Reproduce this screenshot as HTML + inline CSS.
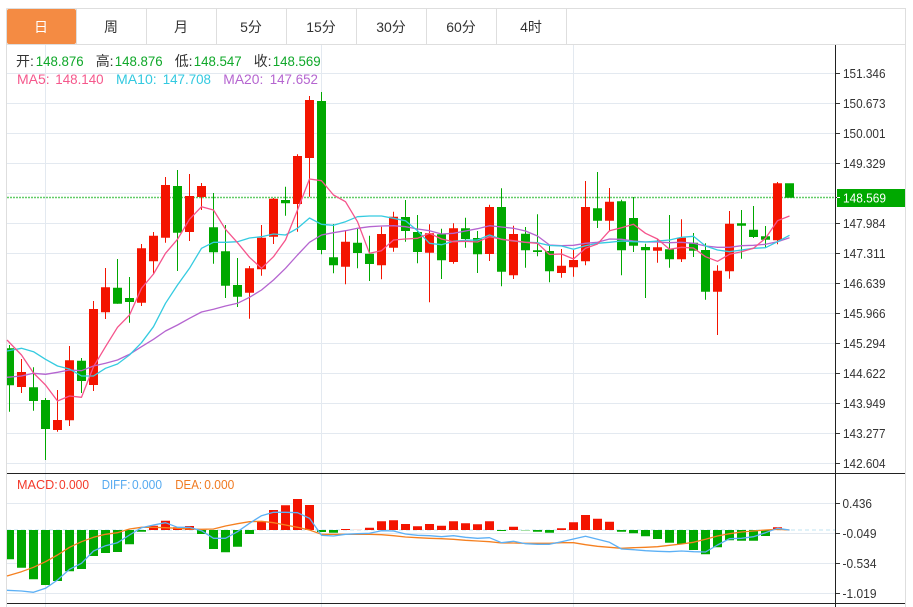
<!DOCTYPE html>
<html lang="zh">
<head>
<meta charset="utf-8">
<title>K线图</title>
<style>
html,body{margin:0;padding:0;background:#fff;width:913px;height:607px;overflow:hidden}
svg{display:block;position:absolute;left:0;top:0}
text{font-family:"Liberation Sans","Noto Sans CJK SC",sans-serif}
.tab{font-size:14px;fill:#333;text-anchor:middle}
.ax{font-size:13px;fill:#333}
.leg{font-size:14px}
.mc{font-size:13px}
</style>
</head>
<body>
<svg width="913" height="607" viewBox="0 0 913 607" xmlns="http://www.w3.org/2000/svg">
<!-- grid -->
<path fill="none" stroke="#e3e9f0" stroke-width="1" d="M7 73.5H835M7 103.5H835M7 133.5H835M7 163.5H835M7 193.5H835M7 223.5H835M7 253.5H835M7 283.5H835M7 313.5H835M7 343.5H835M7 373.5H835M7 403.5H835M7 433.5H835M7 463.5H835M7 503.5H835M7 533.5H835M7 563.5H835M7 593.5H835M45.5 45V607M321.5 45V607M573.5 45V607"/>
<!-- frame -->
<path fill="none" stroke="#dedede" stroke-width="1" d="M6.5 8.5H905.5V607M6.5 8.5V607M7 44.5H905"/>
<!-- tabs -->
<path fill="none" stroke="#dedede" stroke-width="1" d="M76.5 9V44M146.5 9V44M216.5 9V44M286.5 9V44M356.5 9V44M426.5 9V44M496.5 9V44M566.5 9V44"/>
<rect x="7" y="9" width="69" height="35" rx="2" fill="#f48b43"/>
<text class="tab" x="41" y="32" style="fill:#fff">日</text>
<text class="tab" x="111" y="32">周</text>
<text class="tab" x="181" y="32">月</text>
<text class="tab" x="251" y="32">5分</text>
<text class="tab" x="321" y="32">15分</text>
<text class="tab" x="391" y="32">30分</text>
<text class="tab" x="461" y="32">60分</text>
<text class="tab" x="531" y="32">4时</text>
<!-- price dashed -->
<path d="M7 197.5H835" stroke="#62cc68" stroke-width="1.4" stroke-dasharray="2 1" fill="none"/>
<!-- wicks -->
<path fill="none" stroke="#00a800" stroke-width="1" d="M9.5 345V411.7M33.5 367.3V410.7M45.5 398V460M81.5 358V393M117.5 259V303.7M129.5 277V322.7M177.5 170V271M213.5 193V263.7M225.5 225V298M237.5 258V307M285.5 186.7V215.7M321.5 92V254.3M333.5 224V273.3M357.5 228.3V268.3M369.5 235.7V281M405.5 200V241.7M417.5 215V263.3M441.5 228.7V279M465.5 217.7V247.7M477.5 231V273M501.5 188.3V286.3M525.5 227V267.7M537.5 214.3V256.3M549.5 246V282.3M597.5 172V228M621.5 199.7V275.3M633.5 197V252M645.5 243.7V298M669.5 215V267.7M693.5 233V257M705.5 243.3V299.7M741.5 210V258.7M753.5 206V238M765.5 226V247.7"/>
<path fill="none" stroke="#f31400" stroke-width="1" d="M21.5 359V393M57.5 390V431.7M69.5 346V426M93.5 301V391M105.5 268V319M141.5 244V306M153.5 232V274M165.5 177V242.7M189.5 174V241M201.5 183V210M249.5 266V318.7M261.5 225V275.7M273.5 198V244M297.5 154.3V231.7M309.5 96V196.7M345.5 230V284.3M381.5 226.7V279.3M393.5 211.7V251.7M429.5 224.3V302.3M453.5 223.3V263.7M489.5 204.7V261M513.5 225.7V279M561.5 249V277.7M573.5 250V276.7M585.5 181V265.3M609.5 188V231.3M657.5 239V262.7M681.5 219.3V262M717.5 265.3V335M729.5 211V278.7M777.5 182V244.3"/>
<!-- bodies -->
<path fill="#00a800" d="M7 348.3h7V385.3h-7zM29 387.3h9V401h-9zM41 400h9V429h-9zM77 360.7h9V381h-9zM113 287.7h9V303.7h-9zM125 298h9V302h-9zM173 186h9V232.7h-9zM209 227.3h9V252.3h-9zM221 251.3h9V285.7h-9zM233 285h9V296.7h-9zM281 200h9V203.3h-9zM317 101h9V250h-9zM329 257.3h9V265.3h-9zM353 242.7h9V253h-9zM365 253.7h9V264h-9zM401 217h9V231h-9zM413 232h9V252h-9zM437 234.3h9V260.3h-9zM461 228.3h9V239h-9zM473 238h9V254.3h-9zM497 207h9V271.7h-9zM521 233.7h9V250.3h-9zM533 250.3h9V252h-9zM545 251h9V271.3h-9zM593 208.3h9V220.7h-9zM617 201.3h9V250.3h-9zM629 218h9V245.7h-9zM641 247h9V250.3h-9zM665 249.3h9V259.3h-9zM689 242.7h9V250.7h-9zM701 250h9V291.7h-9zM737 223.3h9V225.7h-9zM749 229.7h9V237h-9zM761 236.3h9V239.7h-9zM785 183.3h9V197.7h-9z"/>
<path fill="#f31400" d="M17 372h9V387h-9zM53 420h9V430h-9zM65 360.3h9V420.3h-9zM89 309h9V385h-9zM101 287.3h9V312.3h-9zM137 248.3h9V302.7h-9zM149 235.7h9V261.3h-9zM161 185h9V237.7h-9zM185 196h9V232h-9zM197 186h9V197h-9zM245 268.3h9V292.7h-9zM257 237.7h9V269.3h-9zM269 198.7h9V236.7h-9zM293 156h9V204h-9zM305 100h9V158h-9zM341 241.7h9V266.7h-9zM377 234h9V265.3h-9zM389 216.7h9V247.7h-9zM425 233.3h9V252.7h-9zM449 228.3h9V262h-9zM485 207h9V254h-9zM509 234h9V275.3h-9zM557 265.7h9V273h-9zM569 260h9V267.3h-9zM581 207h9V261.3h-9zM605 201.7h9V220.7h-9zM653 247.3h9V250.7h-9zM677 237.7h9V259.3h-9zM713 270.7h9V291.7h-9zM725 223.7h9V271.3h-9zM773 183.3h9V240.3h-9z"/>
<!-- MA lines -->
<polyline fill="none" stroke="#b565d0" stroke-width="1.3" stroke-linejoin="round" points="7,377.3 21.5,376 33.5,373.3 45.5,374.3 57.5,372.3 69.5,370 81.5,370.7 93.5,366 105.5,363.3 117.5,360 129.5,354.3 141.5,346.7 153.5,339.3 165.5,331 177.5,325 189.5,318.3 201.5,312 213.5,309.3 225.5,306 237.5,303.3 249.5,297.3 261.5,290 273.5,280 285.5,268.3 297.5,255 309.5,242.3 321.5,235 333.5,232.7 345.5,230.7 357.5,228.3 369.5,226.7 381.5,226 393.5,225.7 405.5,226.7 417.5,229 429.5,230.7 441.5,234 453.5,233.3 465.5,231 477.5,228.7 489.5,225.7 501.5,227 513.5,228.3 525.5,231 537.5,236 549.5,245 561.5,245.7 573.5,245.3 585.5,243.3 597.5,242.3 609.5,239 621.5,239.3 633.5,241 645.5,242 657.5,242 669.5,242.7 681.5,242.3 693.5,243.3 705.5,246 717.5,247.3 729.5,247.3 741.5,245.7 753.5,245.3 765.5,244.3 777.5,241.7 789.5,237.7"/>
<polyline fill="none" stroke="#35cbe0" stroke-width="1.3" stroke-linejoin="round" points="7,351 21.5,348.3 33.5,351.7 45.5,359.3 57.5,366 69.5,369 81.5,376 93.5,376 105.5,368.3 117.5,364 129.5,355 141.5,342.7 153.5,326.7 165.5,303.3 177.5,285 189.5,268.3 201.5,248.3 213.5,242.3 225.5,242.3 237.5,241.7 249.5,238 261.5,236.7 273.5,234 285.5,235 297.5,228.3 309.5,218 321.5,224.3 333.5,225.3 345.5,221.7 357.5,216.7 369.5,216 381.5,216 393.5,218.3 405.5,220.7 417.5,230.7 429.5,243.3 441.5,244.7 453.5,241.3 465.5,240.3 477.5,240 489.5,235 501.5,239.3 513.5,241 525.5,242.3 537.5,242.7 549.5,245.5 561.5,246 573.5,249.3 585.5,245.7 597.5,243.3 609.5,242.3 621.5,241 633.5,241.7 645.5,242 657.5,241 669.5,240 681.5,237.3 693.5,236.3 705.5,246 717.5,250 729.5,251.7 741.5,250 753.5,248.3 765.5,247.7 777.5,241.7 789.5,235.3"/>
<polyline fill="none" stroke="#f5548c" stroke-width="1.3" stroke-linejoin="round" points="7,340 21.5,355 33.5,373 45.5,385 57.5,401 69.5,396 81.5,397.3 93.5,366.7 105.5,346.7 117.5,327.3 129.5,315 141.5,288.3 153.5,274 165.5,253.3 177.5,239.3 189.5,219.3 201.5,206.7 213.5,210 225.5,229.3 237.5,242.7 249.5,257.3 261.5,268.3 273.5,256.7 285.5,240 297.5,210 309.5,179 321.5,180.7 333.5,195 345.5,201.7 357.5,221.7 369.5,253.3 381.5,250.7 393.5,240 405.5,239 417.5,238.3 429.5,233.3 441.5,239 453.5,241.7 465.5,241.3 477.5,242 489.5,236.7 501.5,239.3 513.5,240.7 525.5,242.3 537.5,243.3 549.5,254.5 561.5,254 573.5,259 585.5,248.3 597.5,244 609.5,230.7 621.5,227.7 633.5,224.3 645.5,233.3 657.5,239 669.5,249.3 681.5,247.3 693.5,248 705.5,256.7 717.5,261.3 729.5,254.3 741.5,251.7 753.5,248.3 765.5,238.3 777.5,220.7 789.5,216"/>
<!-- legend -->
<text class="leg" x="16" y="66" style="fill:#333">开:</text>
<text class="leg" x="35.7" y="66" style="fill:#10a82a" textLength="48" lengthAdjust="spacingAndGlyphs">148.876</text>
<text class="leg" x="95.7" y="66" style="fill:#333">高:</text>
<text class="leg" x="114.7" y="66" style="fill:#10a82a" textLength="48" lengthAdjust="spacingAndGlyphs">148.876</text>
<text class="leg" x="174.7" y="66" style="fill:#333">低:</text>
<text class="leg" x="193.7" y="66" style="fill:#10a82a" textLength="48" lengthAdjust="spacingAndGlyphs">148.547</text>
<text class="leg" x="253.7" y="66" style="fill:#333">收:</text>
<text class="leg" x="272.7" y="66" style="fill:#10a82a" textLength="48" lengthAdjust="spacingAndGlyphs">148.569</text>
<text class="leg" x="17" y="84" style="fill:#f5588c" textLength="32.7" lengthAdjust="spacingAndGlyphs">MA5:</text>
<text class="leg" x="55.3" y="84" style="fill:#f5588c" textLength="48.3" lengthAdjust="spacingAndGlyphs">148.140</text>
<text class="leg" x="116" y="84" style="fill:#33c9e0" textLength="40.7" lengthAdjust="spacingAndGlyphs">MA10:</text>
<text class="leg" x="162.7" y="84" style="fill:#33c9e0" textLength="48.3" lengthAdjust="spacingAndGlyphs">147.708</text>
<text class="leg" x="223.3" y="84" style="fill:#b565d0" textLength="40" lengthAdjust="spacingAndGlyphs">MA20:</text>
<text class="leg" x="269.7" y="84" style="fill:#b565d0" textLength="48.3" lengthAdjust="spacingAndGlyphs">147.652</text>
<!-- histogram -->
<path d="M7 530H835" stroke="#bfe3f0" stroke-width="1" stroke-dasharray="4 3" fill="none"/>
<path fill="#00a800" d="M7 530h7V559.3h-7zM17 530h9V567.7h-9zM29 530h9V579.3h-9zM41 530h9V585h-9zM53 530h9V581h-9zM65 530h9V571.3h-9zM77 530h9V569h-9zM89 530h9V556h-9zM101 530h9V553h-9zM113 530h9V552h-9zM125 530h9V544.3h-9zM137 530h9V531.7h-9zM197 530h9V534h-9zM209 530h9V549h-9zM221 530h9V552.3h-9zM233 530h9V546.7h-9zM245 530h9V534h-9zM317 530h9V532h-9zM329 530h9V532.7h-9zM497 530h9V531h-9zM533 530h9V531.7h-9zM545 530h9V532.7h-9zM617 530h9V531.7h-9zM629 530h9V533.3h-9zM641 530h9V536.3h-9zM653 530h9V539h-9zM665 530h9V542.7h-9zM677 530h9V544h-9zM689 530h9V550h-9zM701 530h9V554.3h-9zM713 530h9V547.3h-9zM725 530h9V540.3h-9zM737 530h9V540.7h-9zM749 530h9V540.7h-9zM761 530h9V536h-9z"/>
<path fill="#90d890" d="M521 530h9V530.8h-9z"/>
<path fill="#f31400" d="M149 525.7h9V530h-9zM161 520.7h9V530h-9zM173 527.3h9V530h-9zM185 526h9V530h-9zM257 521.3h9V530h-9zM269 510h9V530h-9zM281 505.3h9V530h-9zM293 499h9V530h-9zM305 505h9V530h-9zM341 529h9V530h-9zM365 527.7h9V530h-9zM377 521.3h9V530h-9zM389 520.3h9V530h-9zM401 524h9V530h-9zM413 526.3h9V530h-9zM425 524h9V530h-9zM437 525.7h9V530h-9zM449 521.3h9V530h-9zM461 523.3h9V530h-9zM473 524.3h9V530h-9zM485 521.3h9V530h-9zM509 526.7h9V530h-9zM557 528.3h9V530h-9zM569 522.3h9V530h-9zM581 515h9V530h-9zM593 518.7h9V530h-9zM605 521.7h9V530h-9zM773 527.3h9V530h-9z"/>
<path fill="#f8d0c8" d="M353 529.4h9V530h-9z"/>
<!-- DEA / DIFF -->
<polyline fill="none" stroke="#f58020" stroke-width="1.3" stroke-linejoin="round" points="7,576 21.5,571.7 33.5,567.3 45.5,561.7 57.5,555 69.5,547.3 81.5,541.7 93.5,537.3 105.5,534.3 117.5,532.7 129.5,529 141.5,527.3 153.5,527.3 165.5,527.7 177.5,528.3 189.5,529 201.5,529.3 213.5,529 225.5,526 237.5,523.7 249.5,521.7 261.5,521.3 273.5,522.7 285.5,525 297.5,527.3 309.5,530 321.5,534.3 333.5,534.3 345.5,534.3 357.5,534.3 369.5,534.3 381.5,534.7 393.5,535.7 405.5,537 417.5,537.7 429.5,538.3 441.5,538.7 453.5,539.3 465.5,540.3 477.5,541 489.5,541.7 501.5,543 513.5,543 525.5,543.3 537.5,543.3 549.5,543.3 561.5,542.7 573.5,542.7 585.5,544.7 597.5,546.3 609.5,547.3 621.5,548.3 633.5,547.7 645.5,547.3 657.5,546.7 669.5,545.3 681.5,544 693.5,542.3 705.5,539.3 717.5,536 729.5,533.7 741.5,532 753.5,531 765.5,530 777.5,529.3 789.5,530"/>
<polyline fill="none" stroke="#5cb0f5" stroke-width="1.3" stroke-linejoin="round" points="7,590.3 21.5,591 33.5,592.3 45.5,588.3 57.5,580 69.5,569.3 81.5,563.3 93.5,551 105.5,545.7 117.5,542.7 129.5,535 141.5,527.7 153.5,525 165.5,522.7 177.5,527.3 189.5,527.3 201.5,530.7 213.5,538.3 225.5,538.3 237.5,531.7 249.5,523.3 261.5,515.7 273.5,512.3 285.5,512.3 297.5,512.7 309.5,518.3 321.5,535.3 333.5,536 345.5,534.3 357.5,533.7 369.5,533.3 381.5,530.7 393.5,531 405.5,534 417.5,535.3 429.5,535.7 441.5,536.7 453.5,535.7 465.5,537.3 477.5,538.3 489.5,537.7 501.5,542.7 513.5,541.3 525.5,543.7 537.5,544.3 549.5,544.3 561.5,541.7 573.5,539 585.5,536.3 597.5,539.3 609.5,542.3 621.5,549 633.5,549.7 645.5,550.7 657.5,551.3 669.5,551.7 681.5,551 693.5,551.7 705.5,552 717.5,545 729.5,538.7 741.5,538.3 753.5,536.7 765.5,532.7 777.5,528.3 789.5,530"/>
<!-- macd legend -->
<text class="mc" x="17" y="489" style="fill:#f33a2a" textLength="40.7" lengthAdjust="spacingAndGlyphs">MACD:</text>
<text class="mc" x="59" y="489" style="fill:#f33a2a" textLength="30" lengthAdjust="spacingAndGlyphs">0.000</text>
<text class="mc" x="101.7" y="489" style="fill:#55aaf0" textLength="28.7" lengthAdjust="spacingAndGlyphs">DIFF:</text>
<text class="mc" x="132" y="489" style="fill:#55aaf0" textLength="30" lengthAdjust="spacingAndGlyphs">0.000</text>
<text class="mc" x="175.3" y="489" style="fill:#f07a20" textLength="26.7" lengthAdjust="spacingAndGlyphs">DEA:</text>
<text class="mc" x="204.3" y="489" style="fill:#f07a20" textLength="30" lengthAdjust="spacingAndGlyphs">0.000</text>
<!-- axes -->
<path fill="none" stroke="#222" stroke-width="1" d="M7 473.5H905M7 603.5H905M835.5 45V607"/>
<path fill="none" stroke="#333" stroke-width="1" d="M836 73.5h4M836 103.5h4M836 133.5h4M836 163.5h4M836 223.5h4M836 253.5h4M836 283.5h4M836 313.5h4M836 343.5h4M836 373.5h4M836 403.5h4M836 433.5h4M836 463.5h4M836 503.5h4M836 533.5h4M836 563.5h4M836 593.5h4"/>
<g>
<text class="ax" x="843" y="78" textLength="42.5" lengthAdjust="spacingAndGlyphs">151.346</text>
<text class="ax" x="843" y="108" textLength="42.5" lengthAdjust="spacingAndGlyphs">150.673</text>
<text class="ax" x="843" y="138" textLength="42.5" lengthAdjust="spacingAndGlyphs">150.001</text>
<text class="ax" x="843" y="168" textLength="42.5" lengthAdjust="spacingAndGlyphs">149.329</text>
<text class="ax" x="843" y="198" textLength="42.5" lengthAdjust="spacingAndGlyphs">148.656</text>
<text class="ax" x="843" y="228" textLength="42.5" lengthAdjust="spacingAndGlyphs">147.984</text>
<text class="ax" x="843" y="258" textLength="42.5" lengthAdjust="spacingAndGlyphs">147.311</text>
<text class="ax" x="843" y="288" textLength="42.5" lengthAdjust="spacingAndGlyphs">146.639</text>
<text class="ax" x="843" y="318" textLength="42.5" lengthAdjust="spacingAndGlyphs">145.966</text>
<text class="ax" x="843" y="348" textLength="42.5" lengthAdjust="spacingAndGlyphs">145.294</text>
<text class="ax" x="843" y="378" textLength="42.5" lengthAdjust="spacingAndGlyphs">144.622</text>
<text class="ax" x="843" y="408" textLength="42.5" lengthAdjust="spacingAndGlyphs">143.949</text>
<text class="ax" x="843" y="438" textLength="42.5" lengthAdjust="spacingAndGlyphs">143.277</text>
<text class="ax" x="843" y="468" textLength="42.5" lengthAdjust="spacingAndGlyphs">142.604</text>
<text class="ax" x="842.5" y="508" textLength="29.5" lengthAdjust="spacingAndGlyphs">0.436</text>
<text class="ax" x="842.5" y="538" textLength="34" lengthAdjust="spacingAndGlyphs">-0.049</text>
<text class="ax" x="842.5" y="568" textLength="34" lengthAdjust="spacingAndGlyphs">-0.534</text>
<text class="ax" x="842.5" y="598" textLength="34" lengthAdjust="spacingAndGlyphs">-1.019</text>
</g>
<rect x="837" y="189" width="68" height="18" fill="#00a800"/>
<path d="M837 197.5h3" stroke="#fff" stroke-width="1"/>
<path d="M836 197.5h1" stroke="#333" stroke-width="1"/>
<text class="ax" x="843" y="202.5" style="fill:#fff" textLength="43" lengthAdjust="spacingAndGlyphs">148.569</text>
</svg>
</body>
</html>
